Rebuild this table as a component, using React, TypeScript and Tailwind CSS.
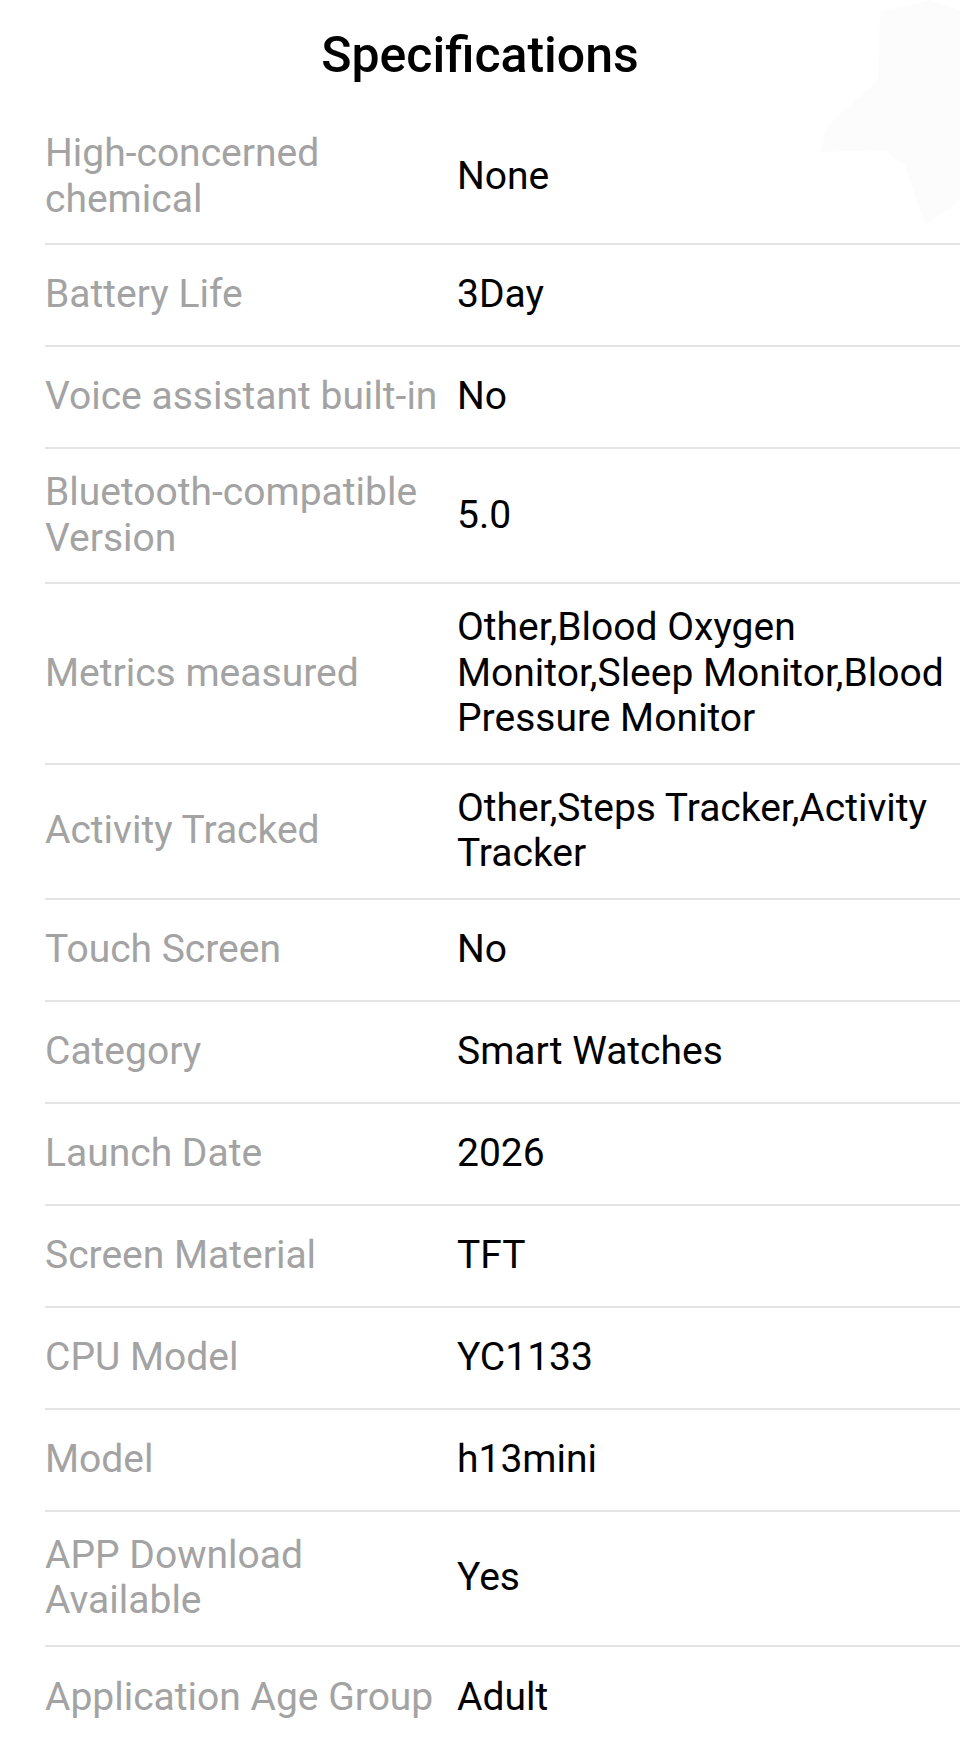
import React from 'react'

type Spec = { label: string; value: string }

const specs: Spec[] = [
    { label: 'High-concerned chemical', value: 'None' },
    { label: 'Battery Life', value: '3Day' },
    { label: 'Voice assistant built-in', value: 'No' },
    { label: 'Bluetooth-compatible Version', value: '5.0' },
    { label: 'Metrics measured', value: 'Other,Blood Oxygen Monitor,Sleep Monitor,Blood Pressure Monitor' },
    { label: 'Activity Tracked', value: 'Other,Steps Tracker,Activity Tracker' },
    { label: 'Touch Screen', value: 'No' },
    { label: 'Category', value: 'Smart Watches' },
    { label: 'Launch Date', value: '2026' },
    { label: 'Screen Material', value: 'TFT' },
    { label: 'CPU Model', value: 'YC1133' },
    { label: 'Model', value: 'h13mini' },
    { label: 'APP Download Available', value: 'Yes' },
    { label: 'Application Age Group', value: 'Adult' },
]

const App: React.FC = () => {
    return (
        <div className="relative min-h-[1742px] w-[960px] overflow-hidden bg-white font-['Roboto',sans-serif]">
            {/* faint watermark top right */}
            <svg className="absolute right-0 top-0" width="180" height="230" viewBox="0 0 180 230">
                <path d="M100 12 L150 0 L180 10 L180 200 L145 225 L125 165 L105 150 L40 152 L48 125 L98 80 Z" fill="#fcfcfc" />
            </svg>

            <div className="relative flex h-[110px] items-center justify-center">
                <h1 className="text-[50px] font-medium leading-none text-black">Specifications</h1>
            </div>

            <div className="relative pl-[45px]">
                {specs.map((spec, i) => (
                    <div
                        key={spec.label}
                        className={`flex min-h-[102px] items-center py-[21px] ${i < specs.length - 1 ? 'border-b-2 border-[#e4e4e4]' : ''}`}
                    >
                        <div className="w-[412px] shrink-0 pr-[8px] text-[39px] leading-[45.5px] text-[#a3a3a3]">
                            {spec.label}
                        </div>
                        <div className="flex-1 pr-[6px] text-[39px] leading-[45.5px] text-black">
                            {spec.value}
                        </div>
                    </div>
                ))}
            </div>
        </div>
    )
}

export default App
